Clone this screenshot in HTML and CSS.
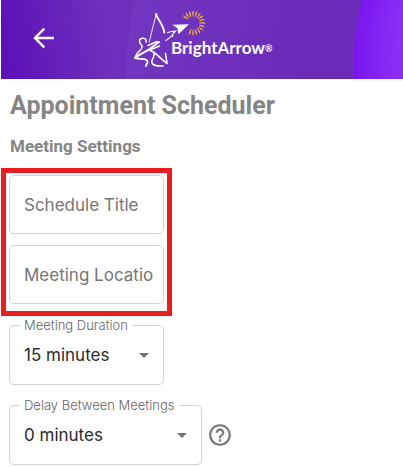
FILE: index.html
```
<!DOCTYPE html>
<html lang="en">
  <head>
    <meta charset="UTF-8" />
    <meta name="viewport" content="width=device-width, initial-scale=1.0" />
    <title>Appointment Scheduler</title>
    <link rel="stylesheet" href="styles.css">
  </head>
  <body>
    <header class="app-header">
      <button type="button" class="back-btn" aria-label="Back">
        <svg width="22" height="22" viewBox="0 0 22 22" fill="none" stroke="#fff" stroke-width="2.4">
          <path d="M21 11H2.5M11.3 1.6L2 11l9.3 9.4" />
        </svg>
      </button>
      <a href="#" class="logo" aria-label="BrightArrow">
        <svg width="150" height="60" viewBox="0 0 150 60">
          <defs>
            <path id="ray" d="M-0.4 -6.5L-0.9 -10.5L0.5 -13L0.8 -10.5L0.4 -6.5Z" />
          </defs>
          <!-- Archer -->
          <g fill="none" stroke="#fff" stroke-linecap="round" stroke-linejoin="round">
            <path d="M23.2 6L16.2 34" stroke-width="0.9" />
            <path d="M23.2 6C23.5 11 30 15 31.3 24.5" stroke-width="1.9" />
            <path d="M13 34C14.5 29.5 7 29 6.5 33C6.3 36 9.5 36 9 39.5C8.5 42.5 4 43 2 49.5" stroke-width="1.5" />
            <path d="M2 50C8 45 14 43.5 18 40L26 34" stroke-width="2.1" />
            <path d="M15 37.5L24 33.5M18 41.5L26.5 38" stroke-width="1.4" />
            <path d="M2 50C7 52 14.5 49.5 14.5 54C14.5 56 12.5 57 13 58" stroke-width="1.8" />
            <path d="M16 42C24 44.5 26 50 34 55.5L32.5 45.5" stroke-width="1.6" />
            <path d="M21 46C22 50 17.5 51.5 19 55C21 58.5 25 58 30 58" stroke-width="1.6" />
            <path d="M33 32.5C37 30 40 26.5 43 22.5M34.5 24.5L41 23L39.5 28.5" stroke-width="1.1" />
          </g>
          <path fill="#fff" d="M56 16.3L39 16.8L44.3 20L45.5 26.3Z" />
          <!-- Sun -->
          <g fill="#f3a63c" transform="translate(60 15)">
            <use href="#ray" transform="rotate(-54)" />
            <use href="#ray" transform="rotate(-36)" />
            <use href="#ray" transform="rotate(-18)" />
            <use href="#ray" />
            <use href="#ray" transform="rotate(18)" />
            <use href="#ray" transform="rotate(36)" />
            <use href="#ray" transform="rotate(54)" />
            <use href="#ray" transform="rotate(72)" />
            <use href="#ray" transform="rotate(90)" />
            <use href="#ray" transform="rotate(108)" />
            <use href="#ray" transform="rotate(126)" />
            <use href="#ray" transform="rotate(144)" />
            <use href="#ray" transform="rotate(162)" />
            <use href="#ray" transform="rotate(180)" />
            <use href="#ray" transform="rotate(198)" />
          </g>
          <text class="logo-text" x="38" y="46">BrightArrow<tspan class="logo-mark" dy="-2">®</tspan></text>
        </svg>
      </a>
    </header>

    <main class="content">
      <h1>Appointment Scheduler</h1>
      <h2>Meeting Settings</h2>

      <form class="settings-form">
        <div class="highlight">
          <input type="text" class="text-box" placeholder="Schedule Title" aria-label="Schedule Title" />
          <input type="text" class="text-box" placeholder="Meeting Location" aria-label="Meeting Location" />
        </div>

        <div class="field field-short">
          <label for="duration">Meeting Duration</label>
          <select id="duration">
            <option>15 minutes</option>
            <option>30 minutes</option>
          </select>
          <svg class="caret" width="10" height="5" viewBox="0 0 10 5"><path d="M0 0h10L5 5z" /></svg>
        </div>

        <div class="field-row">
          <div class="field field-long">
            <label for="delay">Delay Between Meetings</label>
            <select id="delay">
              <option>0 minutes</option>
              <option>5 minutes</option>
            </select>
            <svg class="caret" width="10" height="5" viewBox="0 0 10 5"><path d="M0 0h10L5 5z" /></svg>
          </div>
          <button type="button" class="help-btn" aria-label="Help">
            <svg width="26" height="26" viewBox="0 0 24 24" fill="#757575">
              <path d="M11 18h2v-2h-2v2zm1-16C6.48 2 2 6.48 2 12s4.48 10 10 10 10-4.48 10-10S17.52 2 12 2zm0 18c-4.41 0-8-3.59-8-8s3.59-8 8-8 8 3.59 8 8-3.59 8-8 8zm0-14c-2.21 0-4 1.79-4 4h2c0-1.1.9-2 2-2s2 .9 2 2c0 2-3 1.75-3 5h2c0-2.25 3-2.5 3-5 0-2.21-1.79-4-4-4z" />
            </svg>
          </button>
        </div>
      </form>
    </main>
  </body>
</html>
```

FILE: styles.css
```
* {
  box-sizing: border-box;
}

body {
  margin: 0;
  background: #fff;
  font-family: Inter, "Open Sans", sans-serif;
}

.app-header {
  display: flex;
  align-items: flex-start;
  height: 79px;
  margin-left: 1px;
  padding: 8px 32px;
  gap: 78px;
  background:
    radial-gradient(circle 306px at calc(100% + 256px) 70px, #8d30f6 260px, #7a17ee 305px, transparent 306px),
    radial-gradient(circle 480px at 604px 90px, rgba(104, 40, 182, 0.6) 300px, rgba(116, 58, 194, 0.6) 479px, transparent 480px),
    linear-gradient(80deg, #5c0fb8, #6d30ba 110px, #6d30ba);
}

button {
  padding: 0;
  border: none;
  background: none;
  cursor: pointer;
}

.back-btn {
  height: 60px;
}

svg {
  display: block;
}

.logo-text {
  fill: #fff;
  font-family: Lato, sans-serif;
  font-size: 17px;
  font-weight: bold;
}

.logo-mark {
  font-size: 9px;
}

.content {
  padding: 12px 1px 2px;
}

h1,
h2 {
  margin: 0 9px;
  color: #858585;
  font-family: Roboto, sans-serif;
  font-weight: bold;
}

h1 {
  font-size: 25px;
  line-height: 30px;
}

h2 {
  margin-top: 14px;
  font-size: 17px;
  line-height: 22px;
}

.settings-form {
  display: flex;
  flex-direction: column;
  align-items: flex-start;
  margin-top: 11px;
}

.highlight {
  display: flex;
  flex-direction: column;
  gap: 11px;
  width: 171px;
  padding: 2px 3px 7px;
  border: 5px solid #e91c1f;
}

.text-box,
select {
  width: 100%;
  padding: 0 14px;
  border: 1px solid #d2d2d2;
  border-radius: 5px;
  background: #fff;
  color: #2b2b2b;
  font-family: inherit;
  font-size: 17px;
}

.text-box {
  height: 59px;
  padding-right: 10px;
}

.text-box::placeholder {
  color: #757575;
  opacity: 1;
}

select {
  height: 60px;
  appearance: none;
}

.field {
  position: relative;
}

.field-short {
  width: 155px;
  margin: 9px 8px 20px;
}

.field-long {
  width: 193px;
}

.field label {
  position: absolute;
  top: -8px;
  left: 10px;
  padding: 0 5px;
  background: #fff;
  color: #666;
  font-size: 13px;
  font-weight: 300;
  line-height: 16px;
  white-space: nowrap;
}

.caret {
  position: absolute;
  top: 28px;
  right: 15px;
  fill: #757575;
  pointer-events: none;
}

.field-row {
  display: flex;
  align-items: center;
  gap: 5px;
  margin-left: 8px;
}
```
